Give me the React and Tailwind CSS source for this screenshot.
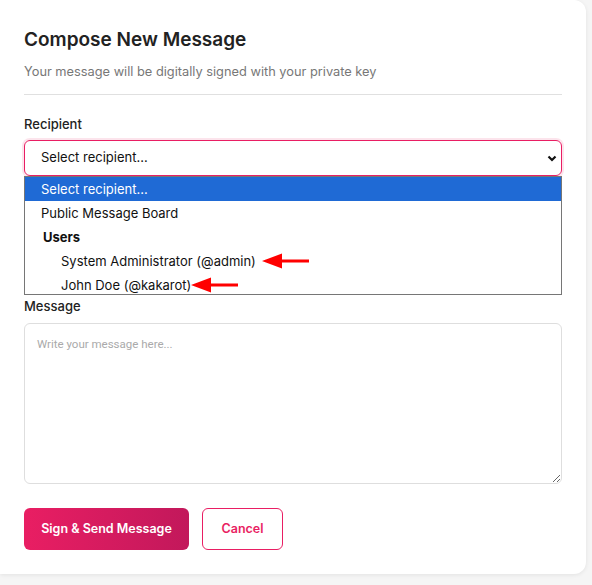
export default function App() {
  return (
    <div className="min-h-[585px] bg-[#f5f5f5] pr-[6px]" style={{ fontFamily: "Inter, 'Noto Sans', sans-serif" }}>
      <div className="bg-white rounded-br-xl rounded-tr-xl shadow-[0_1px_4px_rgba(0,0,0,0.08)] px-6 pt-[28px] pb-[24px]">
        <h1 className="text-[19px] font-semibold text-[#222] leading-[24px]">Compose New Message</h1>
        <p className="mt-[12px] text-[12.8px] text-[#777] leading-[16px]">
          Your message will be digitally signed with your private key
        </p>
        <div className="mt-[14px] h-px bg-[#e0e0e0]" />

        <label className="block mt-[21px] text-[13px] font-medium text-[#222] leading-[16px]">Recipient</label>
        <div className="mt-[8px] h-[36px] rounded-md border border-[#e91e63] shadow-[0_0_0_2px_rgba(233,30,99,0.12)] flex items-center justify-between pl-4 pr-[3px]">
          <span className="text-[13px] text-[#111]">Select recipient...</span>
          <svg width="12" height="12" viewBox="0 0 12 12">
            <path d="M2.5 4.5 L6 8 L9.5 4.5" fill="none" stroke="#111" strokeWidth="2.2" />
          </svg>
        </div>
        <div className="border border-[#767676] text-[13px] text-[#111] leading-[24px] h-[119px]">
          <div className="bg-[#1f6ad5] text-white pl-4">Select recipient...</div>
          <div className="pl-4">Public Message Board</div>
          <div className="pl-[18px] font-bold">Users</div>
          <div className="pl-9 flex items-center">
            System Administrator (@admin)
            <Arrow className="ml-[6px]" />
          </div>
          <div className="pl-9 flex items-center">
            John Doe (@kakarot)
            <Arrow className="ml-0" />
          </div>
        </div>

        <label className="block mt-[3px] text-[13px] font-medium text-[#222] leading-[16px]">Message</label>
        <textarea
          className="mt-[9px] block w-full h-[161px] rounded-md border border-[#dedede] px-3 py-3 text-[11.5px] outline-none placeholder:text-[#aaa]"
          style={{ fontFamily: "Roboto, Arial, sans-serif" }}
          placeholder="Write your message here..."
        />

        <div className="mt-[24px] flex gap-[13px]">
          <button className="h-[42px] w-[165px] rounded-md bg-gradient-to-r from-[#e91e63] to-[#c2185b] text-white text-[12.5px] font-semibold">
            Sign &amp; Send Message
          </button>
          <button className="h-[42px] w-[81px] rounded-md border border-[#e91e63] text-[#e91e63] text-[12.5px] font-semibold bg-white">
            Cancel
          </button>
        </div>
      </div>
    </div>
  );
}

function Arrow({ className }) {
  return (
    <svg className={className} width="48" height="16" viewBox="0 0 48 16">
      <path d="M0 8 L20 0.5 L20 6.5 L47 6.5 L47 9.5 L20 9.5 L20 15.5 Z" fill="#ff0000" />
    </svg>
  );
}
